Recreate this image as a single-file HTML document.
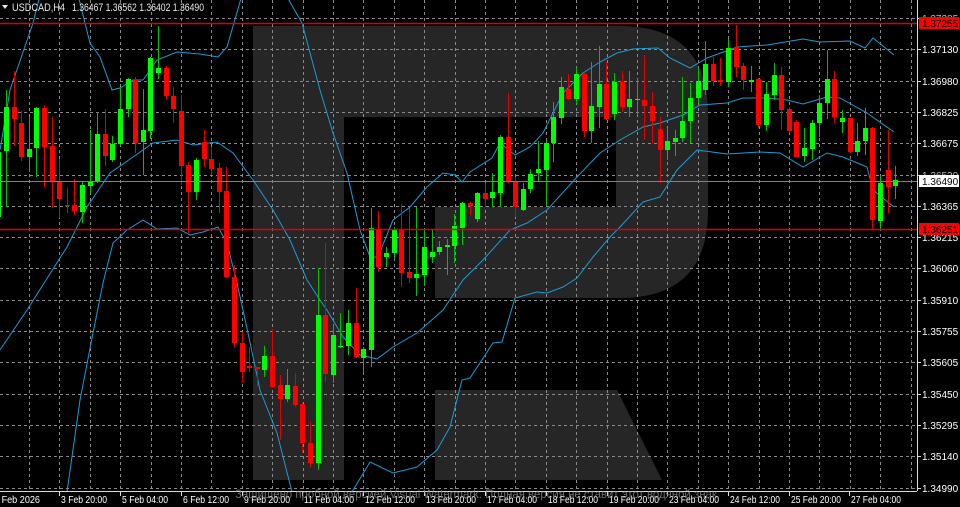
<!DOCTYPE html>
<html><head><meta charset="utf-8"><style>
html,body{margin:0;padding:0;background:#000;width:960px;height:507px;overflow:hidden}
svg{display:block}
text{font-family:"Liberation Sans","DejaVu Sans",sans-serif}
</style></head><body>
<svg id="s" width="960" height="507" xmlns="http://www.w3.org/2000/svg">
<rect width="960" height="507" fill="#000"/>
<g fill="#262626">
<path d="M253 26 H620 Q708 26 708 114 V210 Q708 298 620 298 H435 V207 H616 V117 H344 V480 H253 Z"/>
<path d="M435 390 H617 L662 480 H435 Z"/>
</g>
<g id="grid" stroke="#8a8a8a" stroke-width="1" stroke-dasharray="3,3"></g>
<g id="bands" fill="none" stroke="#1c9bd2" stroke-width="1"></g>
<g id="candles"></g>
<line x1="0" y1="23.5" x2="917" y2="23.5" stroke="#e00000" stroke-width="1.5"/>
<line x1="0" y1="229.5" x2="917" y2="229.5" stroke="#e00000" stroke-width="1.5"/>
<line x1="0" y1="181.5" x2="917" y2="181.5" stroke="#7a8490" stroke-width="1"/>
<line x1="917.5" y1="0" x2="917.5" y2="491" stroke="#ddd"/>
<line x1="0" y1="491.5" x2="917" y2="491.5" stroke="#ddd"/>
<g id="axis" fill="#fff" font-size="10"></g>
<text x="235" y="498" font-size="12" fill="#8a8a8a" opacity="0.8" textLength="485" lengthAdjust="spacingAndGlyphs">Защищено пробной версией Visual Watermark. Полная версия не ставит этот водяной знак.</text>
<path d="M2 5 L8 5 L5 9 Z" fill="#e8e8e8"/>
<text x="12" y="11" font-size="11" fill="#e8e8e8" textLength="53" lengthAdjust="spacingAndGlyphs">USDCAD,H4</text>
<text x="72" y="11" font-size="11" fill="#e8e8e8" textLength="132" lengthAdjust="spacingAndGlyphs">1.36467 1.36562 1.36402 1.36490</text>
<rect x="919" y="17" width="40" height="12" fill="#f00"/>
<text x="922" y="27" font-size="10" fill="#000">1.37255</text>
<rect x="919" y="223" width="40" height="12" fill="#f00"/>
<text x="922" y="233" font-size="10" fill="#000">1.36251</text>
<rect x="919" y="175" width="40" height="12" fill="#fff"/>
<text x="922" y="185" font-size="10" fill="#000">1.36490</text>
</svg>
<script>
var NS="http://www.w3.org/2000/svg";
function el(t,a,p){var e=document.createElementNS(NS,t);for(var k in a)e.setAttribute(k,a[k]);p.appendChild(e);return e;}
var g=document.getElementById('grid');
for(var k=0;k<30;k++){var x=Math.round(29+30.4*k)+0.5;if(x>915)break;el('line',{x1:x,y1:0,x2:x,y2:491},g);}
for(var k=0;k<16;k++){var y=Math.round(18+31.3*k)+0.5;el('line',{x1:0,y1:y,x2:917,y2:y},g);}
var ax=document.getElementById('axis');
var pr=["1.37285","1.37130","1.36980","1.36825","1.36675","1.36520","1.36365","1.36215","1.36060","1.35910","1.35755","1.35605","1.35450","1.35295","1.35140","1.34990"];
for(var k=0;k<16;k++){var y=Math.round(18+31.3*k);el('line',{x1:917,y1:y+.5,x2:921,y2:y+.5,stroke:'#ddd'},ax);
 var t=el('text',{x:922,y:y+4},ax);t.textContent=pr[k];if(k==0||k==5)t.setAttribute('fill','#bbb');}
var dl=[["2 Feb 2026",-8],["3 Feb 20:00",59],["5 Feb 04:00",120],["6 Feb 12:00",181],["9 Feb 20:00",242],["11 Feb 04:00",302],["12 Feb 12:00",363],["13 Feb 20:00",424],["17 Feb 04:00",485],["18 Feb 12:00",546],["19 Feb 20:00",607],["23 Feb 04:00",667],["24 Feb 12:00",728],["25 Feb 20:00",789],["27 Feb 04:00",849]];
dl.forEach(function(d){if(d[1]>0)el('line',{x1:d[1]+.5,y1:491,x2:d[1]+.5,y2:496,stroke:'#ddd'},ax);var w=d[0].length>11?50:46;var t=el('text',{x:d[1]+2,y:503,textLength:w,lengthAdjust:'spacingAndGlyphs'},ax);t.textContent=d[0];});
var B=document.getElementById('bands');
var up=[[0,150],[10,90],[33,23],[40,-5]],up2=[[78,-5],[90,43],[100,57],[112,90],[120,88],[133,80],[143,80],[157,60],[177,52],[200,54],[218,57],[227,47],[242,-5]],
up3=[[286,-5],[302,23],[320,90],[323,100],[333,133],[347,173],[360,230],[370,257],[378,257],[393,220],[410,207],[427,187],[443,173],[455,175],[462,182],[470,172],[492,158],[500,143],[515,155],[530,147],[543,133],[563,93],[583,73],[600,62],[617,53],[633,49],[658,48],[670,58],[690,68],[707,58],[737,47],[767,45],[803,39],[820,42],[850,41],[865,48],[873,38],[894,55]],
mid=[[0,350],[27,310],[67,247],[87,207],[110,173],[133,157],[153,143],[177,140],[193,145],[217,142],[233,153],[253,180],[273,210],[290,240],[307,280],[320,300],[327,310],[343,337],[360,355],[377,359],[393,347],[417,333],[443,310],[463,280],[483,260],[510,230],[527,223],[547,210],[577,177],[600,153],[620,140],[643,127],[660,123],[683,115],[700,105],[727,103],[743,98],[767,98],[787,100],[803,104],[827,97],[840,98],[867,113],[894,132]],
lo=[[67,492],[80,400],[93,333],[103,283],[113,243],[127,230],[143,220],[157,229],[177,228],[190,235],[203,232],[218,227],[227,243],[237,283],[248,333],[260,390],[277,433],[292,492]],
lo2=[[352,492],[370,462],[393,473],[417,467],[437,450],[450,427],[462,380],[470,378],[493,343],[502,342],[515,298],[537,292],[547,293],[563,287],[577,278],[593,257],[610,237],[620,227],[643,202],[660,197],[677,170],[697,150],[727,154],[760,152],[780,153],[803,167],[827,153],[843,157],[867,167],[873,190],[894,207]];
[up,up2,up3,mid,lo,lo2].forEach(function(p){el('polyline',{points:p.map(function(q){return q.join(',')}).join(' ')},B);});
var C=[
[-1,217,152,150,220],
[0,151,107,90,207],[1,107,119,71,146],[2,123,157,111,161],[3,157,149,117,172],[4,148,108,107,177],[5,108,147,105,187],[6,146,182,117,208],[7,181,199,159,218],[8,205,206,188,213],[9,205,211,179,215],[10,212,185,182,223],[11,186,181,130,193],[12,182,134,112,183],[13,134,156,109,166],[14,160,144,136,162],[15,144,109,88,146],[16,109,79,78,117],[17,80,143,77,153],[18,142,130,89,175],[19,131,58,57,139],[20,73,68,26,79],[21,68,96,66,100],[22,96,109,87,123],[23,111,166,95,185],[24,165,192,162,233],[25,192,160,158,200],[26,142,159,130,167],[27,159,169,147,175],[28,168,192,163,213],[29,191,277,167,278],[30,277,343,265,348],[31,343,372,332,383],[32,366,368,347,372],[33,367,369,367,386],[34,370,356,346,377],[35,356,387,329,388],[36,385,399,375,440],[37,399,385,369,402],[38,386,405,373,407],[39,404,443,403,453],[40,443,463,422,468],[41,463,315,268,470],
[42,315,374,243,382],[43,375,335,325,383],[44,347,346,313,348],[45,346,323,310,355],[46,323,357,288,358],[47,358,349,347,373],[48,350,228,208,367],[49,229,267,211,272],[50,257,253,247,267],[51,253,230,227,258],[52,229,273,204,287],[53,272,278,208,283],[54,278,274,207,296],[55,275,247,229,286],[56,257,252,230,263],[57,252,247,241,255],[58,247,245,239,275],[59,246,226,214,263],[60,228,203,202,245],[61,203,206,202,215],[62,219,193,192,222],[63,193,199,183,207],[64,198,192,173,207],[65,193,137,135,207],[66,137,182,93,183],[67,182,207,177,217],[68,210,189,183,211],[69,189,174,169,193],[70,173,169,141,182],[71,170,143,141,206],[72,143,117,102,162],[73,118,87,77,124],[74,89,99,74,100],[75,99,74,67,105],[76,74,131,73,137],[77,131,106,62,143],[78,107,84,46,128],[79,84,119,62,120],[80,114,82,73,120],[81,82,107,71,112],
[82,107,99,71,117],[83,100,99,79,115],[84,100,106,55,140],[85,106,121,92,143],[86,129,150,117,183],[87,150,141,128,160],[88,142,138,130,156],[89,138,121,77,142],[90,121,98,83,143],[91,98,81,68,103],[92,90,64,41,95],[93,64,81,57,86],[94,80,82,58,86],[95,82,48,39,87],[96,47,67,25,77],[97,66,80,63,90],[98,82,80,66,92],[99,79,125,78,128],[100,125,94,82,131],[101,95,75,63,100],[102,75,110,67,130],[103,109,131,107,133],[104,122,157,120,157],[105,156,148,128,162],[106,149,123,120,160],[107,123,103,95,137],[108,103,79,50,119],[109,79,117,71,123],[110,122,118,110,133],[111,118,152,118,153],[112,152,141,123,156],[113,141,128,108,155],[114,128,220,127,230],[115,221,183,176,230],[116,170,187,130,213],[117,186,180,166,199]];
var cg=document.getElementById('candles');
C.forEach(function(c){var x=Math.round(6+7.6*c[0]);var bull=c[2]<c[1];var col=bull?'#00ff00':'#ff0000';var wc=bull?'#00c000':'#e00000';
el('rect',{x:x,y:c[3],width:1,height:Math.max(1,c[4]-c[3]),fill:wc},cg);
var t=Math.min(c[1],c[2]),b=Math.max(c[1],c[2]);el('rect',{x:x-2,y:t,width:5,height:Math.max(1,b-t),fill:col},cg);});
</script>
</body></html>
